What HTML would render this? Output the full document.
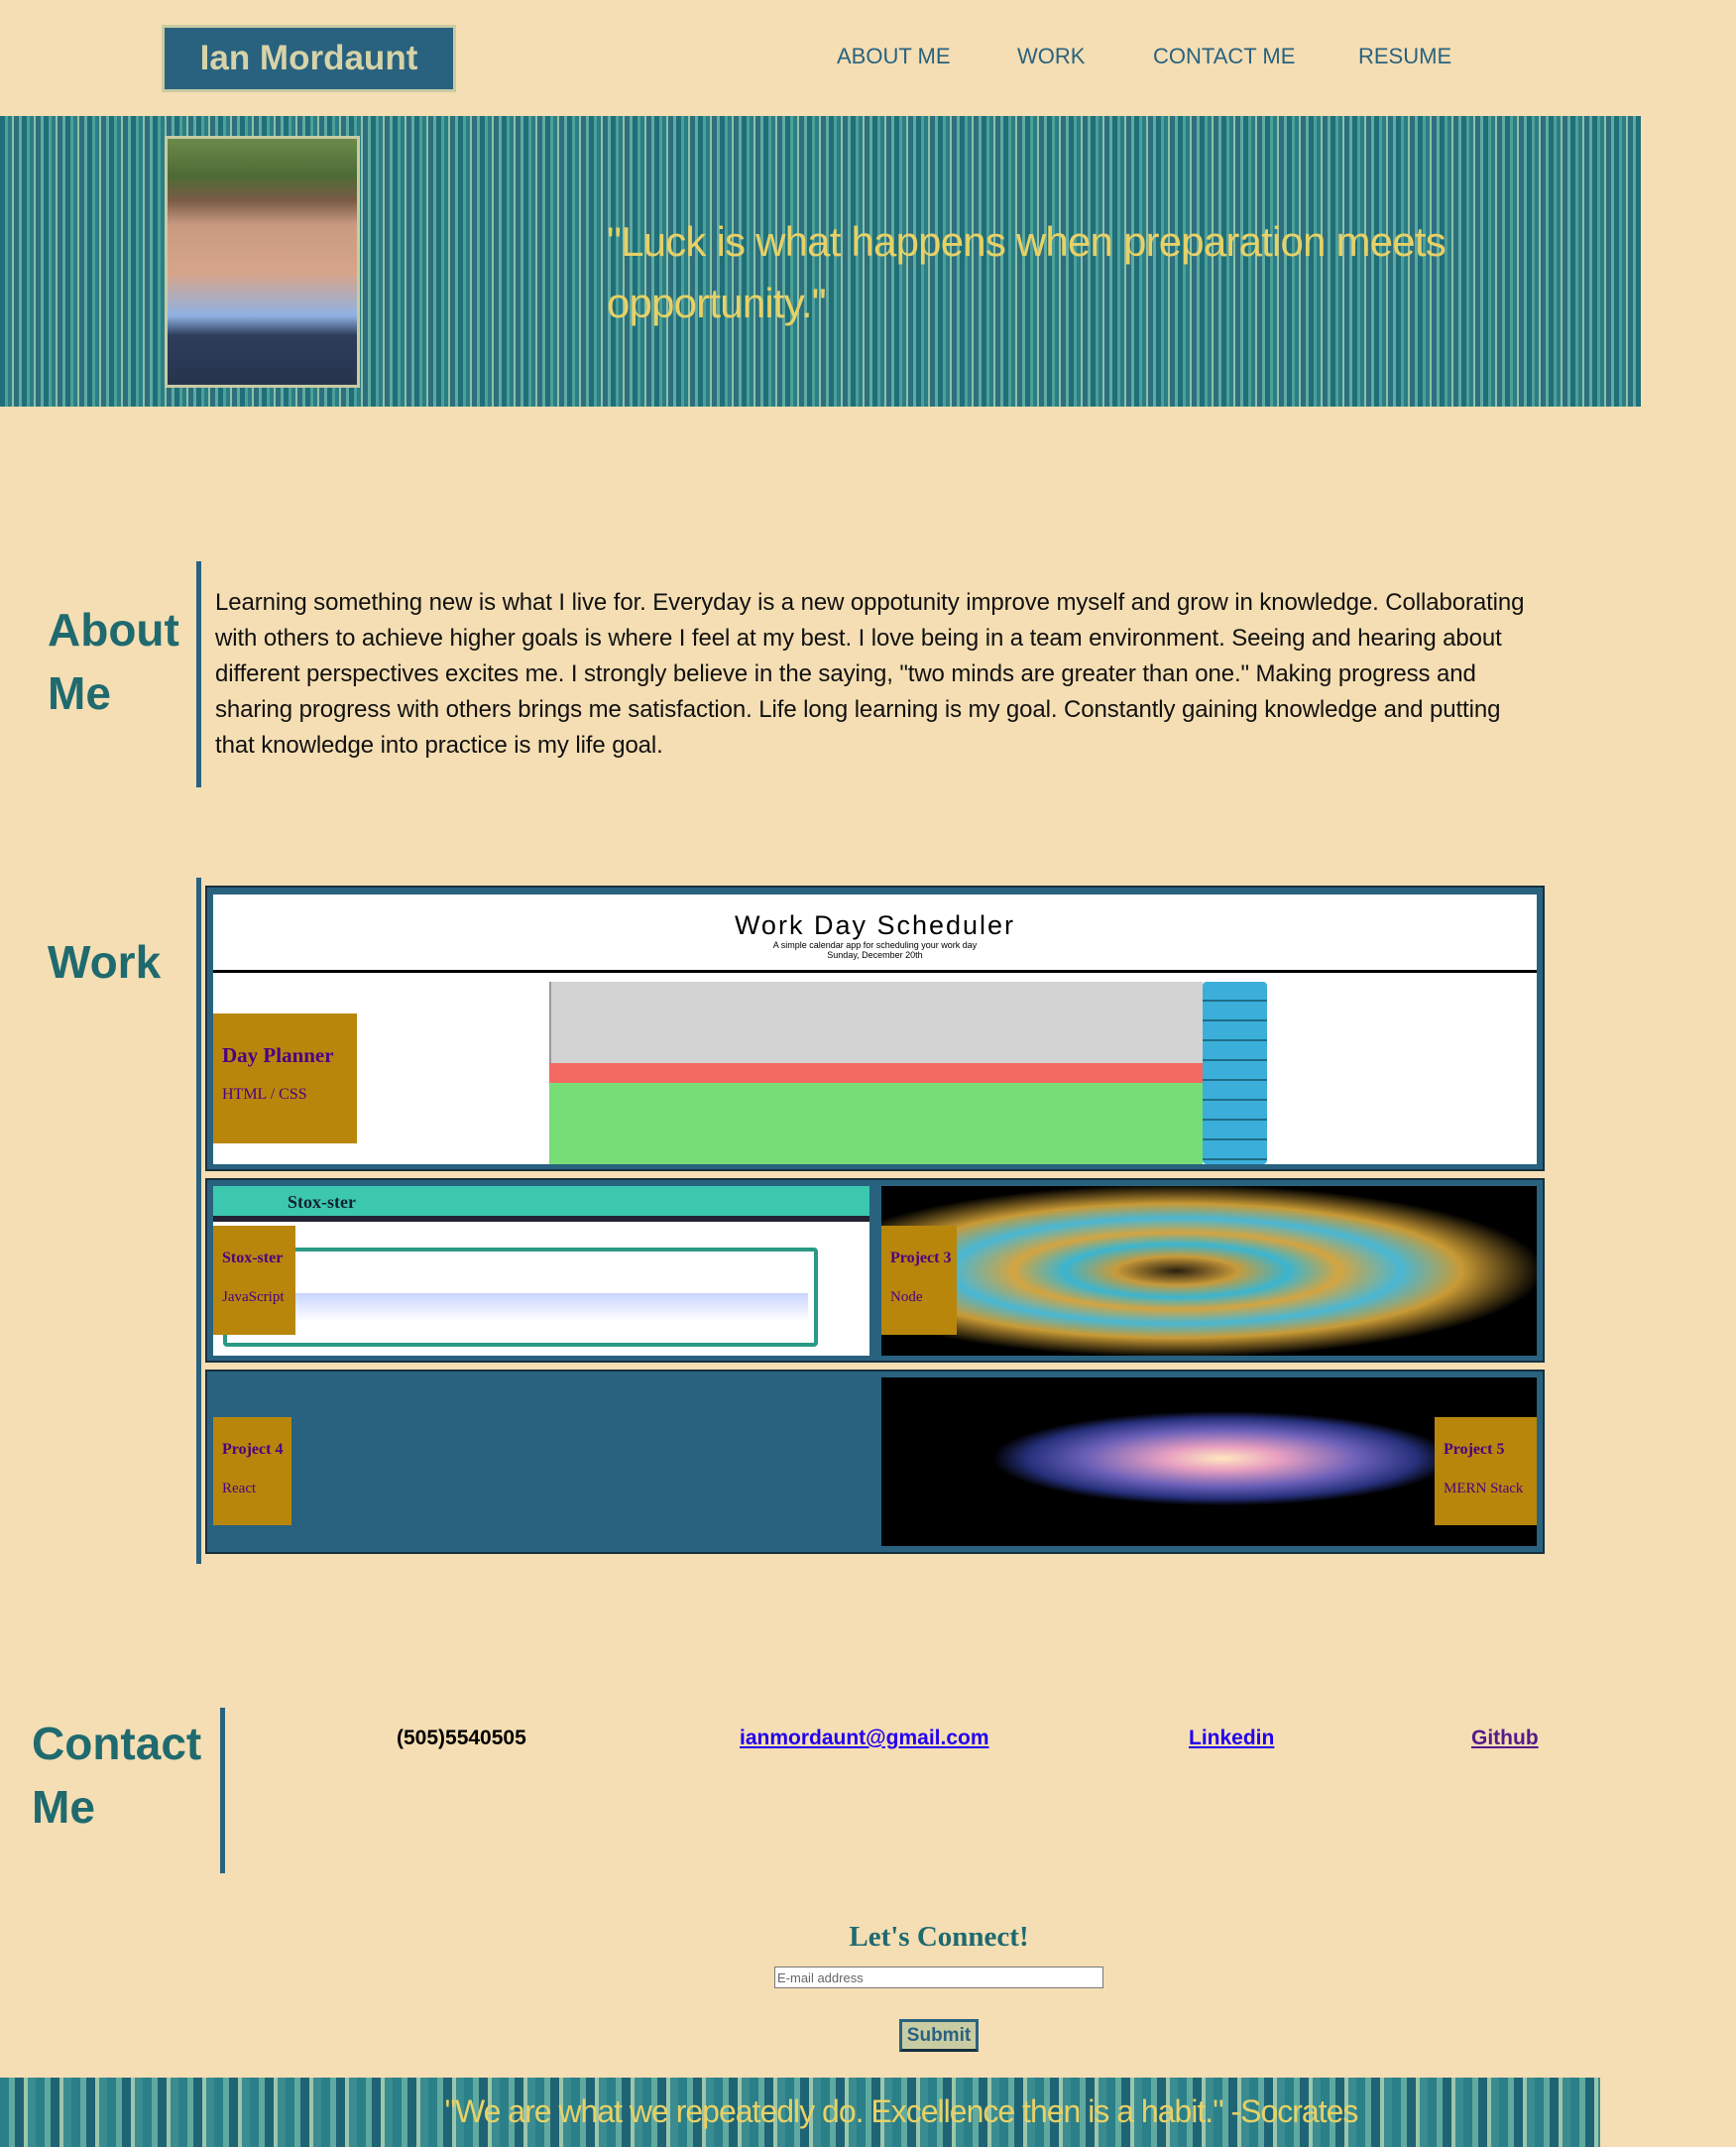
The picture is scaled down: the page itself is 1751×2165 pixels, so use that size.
<!DOCTYPE html>
<html><head><meta charset="utf-8"><style>
*{margin:0;padding:0;box-sizing:border-box}
body{width:1751px;height:2165px;background:#f5deb3;position:relative;overflow:hidden;font-family:"Liberation Sans",sans-serif}
.a{position:absolute}
.logo{left:163px;top:25px;width:297px;height:68px;background:#29627f;border:3px solid #c9cba3;color:#d6d3a8;font:bold 35px "Liberation Sans",sans-serif;display:flex;align-items:center;justify-content:center}
.nav{top:44px;color:#29627f;font-size:22px}
.banner{left:0;top:117px;width:1655px;height:293px;background:repeating-linear-gradient(90deg,#1f6f78 0 5px,#4e9e9a 5px 8px,#2a7f86 8px 12px,#8fbfa6 12px 14px,#2d6f7d 14px 19px,#5faaa3 19px 22px)}
.photo{left:166px;top:137px;width:197px;height:254px;border:3px solid #c9cba3;background:linear-gradient(180deg,#6b8a4a 0,#4d6b35 15%,#7a5c45 25%,#c89a80 35%,#d7a58c 55%,#8fb2e3 72%,#2d3d5a 80%,#26344d 100%)}
.q{color:#e8d166;font-family:"Liberation Sans Narrow","Liberation Sans",sans-serif;font-size:42px;letter-spacing:-0.8px}
.h{color:#1f6a6f;font:bold 46px "Liberation Sans",sans-serif;line-height:64px}
.bar{width:5px;background:#29627f}
.p{left:217px;top:590px;font-size:24px;line-height:36px;color:#111;white-space:nowrap;letter-spacing:-0.1px}
.row{left:207px;width:1351px;background:#29627f;border:2px solid #163040}
.lab{background:#b8860b;color:#4b0082;font-family:"Liberation Serif",serif;padding-left:9px}
.lab b{display:block;font-size:16px}
.lab span{display:block;font-size:15px}
.c{top:1741px;font-weight:bold;font-size:21px}
</style></head><body>
<div class="a logo">Ian Mordaunt</div>
<div class="a nav" style="left:844px">ABOUT ME</div>
<div class="a nav" style="left:1026px">WORK</div>
<div class="a nav" style="left:1163px">CONTACT ME</div>
<div class="a nav" style="left:1370px">RESUME</div>

<div class="a banner"></div>
<div class="a photo"></div>
<div class="a q" style="left:612px;top:213px;line-height:62px">"Luck is what happens when preparation meets<br>opportunity."</div>

<div class="a h" style="left:48px;top:603px">About<br>Me</div>
<div class="a bar" style="left:198px;top:566px;height:228px"></div>
<div class="a p">Learning something new is what I live for. Everyday is a new oppotunity improve myself and grow in knowledge. Collaborating<br>with others to achieve higher goals is where I feel at my best. I love being in a team environment. Seeing and hearing about<br>different perspectives excites me. I strongly believe in the saying, "two minds are greater than one." Making progress and<br>sharing progress with others brings me satisfaction. Life long learning is my goal. Constantly gaining knowledge and putting<br>that knowledge into practice is my life goal.</div>

<div class="a h" style="left:48px;top:938px">Work</div>
<div class="a bar" style="left:198px;top:885px;height:692px"></div>

<div class="a row" style="top:893px;height:288px"></div>
<div class="a" style="left:215px;top:902px;width:1335px;height:272px;background:#fff;overflow:hidden">
 <div class="a" style="left:0;top:16px;width:100%;text-align:center;font-size:27px;letter-spacing:2px">Work Day Scheduler</div>
 <div class="a" style="left:0;top:46px;width:100%;text-align:center;font-size:9px">A simple calendar app for scheduling your work day<br>Sunday, December 20th</div>
 <div class="a" style="left:0;top:76px;width:100%;height:3px;background:#000"></div>
 <div class="a" style="left:339px;top:88px;width:659px;height:82px;background:#d3d3d3;border-left:2px solid #999"></div>
 <div class="a" style="left:339px;top:170px;width:659px;height:20px;background:#f36a62"></div>
 <div class="a" style="left:339px;top:190px;width:659px;height:82px;background:#77dd77"></div>
 <div class="a" style="left:998px;top:88px;width:65px;height:184px;background:repeating-linear-gradient(180deg,#3bafda 0 18px,#1f6d88 18px 20px);border-radius:4px"></div>
</div>
<div class="a lab" style="left:215px;top:1022px;width:145px;height:131px;padding-top:30px"><b style="font-size:21px">Day Planner</b><span style="margin-top:18px;font-size:16px">HTML / CSS</span></div>

<div class="a row" style="top:1188px;height:186px"></div>
<div class="a" style="left:215px;top:1196px;width:662px;height:171px;background:#fff;overflow:hidden">
 <div class="a" style="left:0;top:0;width:100%;height:30px;background:#3cc8ae"></div>
 <div class="a" style="left:75px;top:6px;font:bold 18px 'Liberation Serif',serif;color:#123">Stox-ster</div>
 <div class="a" style="left:0;top:30px;width:100%;height:6px;background:#223"></div>
 <div class="a" style="left:10px;top:62px;width:600px;height:100px;border:4px solid #2a9a84;border-radius:4px"></div>
 <div class="a" style="left:80px;top:108px;width:520px;height:28px;background:linear-gradient(#c8d4ff,#fff)"></div>
</div>
<div class="a" style="left:889px;top:1196px;width:661px;height:171px;background:radial-gradient(ellipse at 45% 50%,#2a2010 0,#c89a3a 12%,#3ab5d0 22%,#d4a440 32%,#49b7d4 44%,#c99a35 56%,#000 72%)"></div>
<div class="a lab" style="left:215px;top:1236px;width:83px;height:110px;padding-top:24px"><b>Stox-ster</b><span style="margin-top:22px">JavaScript</span></div>
<div class="a lab" style="left:889px;top:1236px;width:76px;height:110px;padding-top:24px"><b>Project 3</b><span style="margin-top:22px">Node</span></div>

<div class="a row" style="top:1381px;height:186px"></div>
<div class="a" style="left:889px;top:1389px;width:661px;height:170px;background:radial-gradient(ellipse 35% 28% at 52% 48%,#ffe8c0 0,#e8a0c0 25%,#6a5fb8 60%,#26307a 85%,#000 100%),#000"></div>
<div class="a lab" style="left:215px;top:1429px;width:79px;height:109px;padding-top:24px"><b>Project 4</b><span style="margin-top:22px">React</span></div>
<div class="a lab" style="left:1447px;top:1429px;width:103px;height:109px;padding-top:24px"><b>Project 5</b><span style="margin-top:22px">MERN Stack</span></div>

<div class="a h" style="left:32px;top:1726px">Contact<br>Me</div>
<div class="a bar" style="left:222px;top:1722px;height:167px"></div>
<div class="a c" style="left:400px">(505)5540505</div>
<div class="a c" style="left:746px;color:#2200ee;text-decoration:underline">ianmordaunt@gmail.com</div>
<div class="a c" style="left:1199px;color:#2200ee;text-decoration:underline">Linkedin</div>
<div class="a c" style="left:1484px;color:#551a8b;text-decoration:underline">Github</div>

<div class="a" style="left:0;top:1937px;width:1894px;text-align:center;font:bold 29px 'Liberation Serif',serif;color:#1f6a6f">Let's Connect!</div>
<div class="a" style="left:781px;top:1983px;width:332px;height:22px;background:#fff;border:1px solid #777;font-size:13px;color:#666;padding:3px 2px">E-mail address</div>
<div class="a" style="left:907px;top:2036px;width:80px;height:33px;background:#c9cba3;border:3px solid #29627f;border-bottom-color:#163040;color:#29627f;font:bold 19px 'Liberation Sans',sans-serif;text-align:center;line-height:27px">Submit</div>

<div class="a" style="left:0;top:2095px;width:1614px;height:70px;background:repeating-linear-gradient(90deg,#2a7f88 0 9px,#5fa9a0 9px 15px,#1f6475 15px 24px,#9cc6ab 24px 28px,#3a8c90 28px 36px)"></div>
<div class="a q" style="left:0;top:2111px;width:1818px;text-align:center;font-size:32px;letter-spacing:-1px">"We are what we repeatedly do. Excellence then is a habit." -Socrates</div>
</body></html>
